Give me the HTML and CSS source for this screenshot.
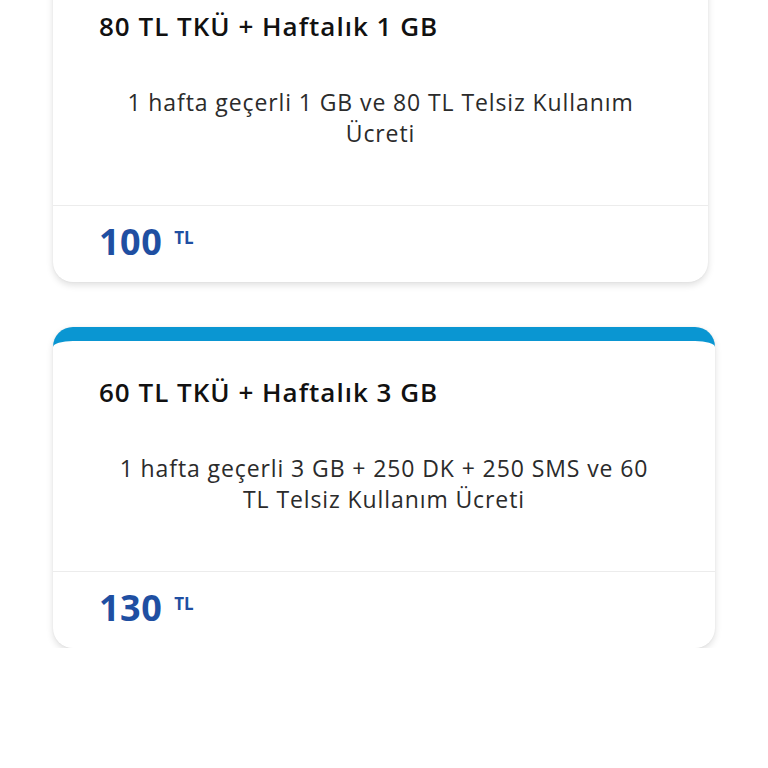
FILE: index.html
```html
<!DOCTYPE html>
<html>
<head>
<meta charset="utf-8">
<link rel="stylesheet" href="styles.css">
</head>
<body>
<div class="packages">
	<div class="package">
		<div class="package-body">
			<div class="package-title">80 TL TKÜ + Haftalık 1 GB</div>
			<div class="package-desc">1 hafta geçerli 1 GB ve 80 TL Telsiz Kullanım Ücreti</div>
		</div>
		<div class="package-price">
			<span class="amount">100</span>
			<span class="currency">TL</span>
		</div>
	</div>
	<div class="package package-wide package-selected">
		<div class="package-body">
			<div class="package-title">60 TL TKÜ + Haftalık 3 GB</div>
			<div class="package-desc">1 hafta geçerli 3 GB + 250 DK + 250 SMS ve 60 TL Telsiz Kullanım Ücreti</div>
		</div>
		<div class="package-price">
			<span class="amount">130</span>
			<span class="currency">TL</span>
		</div>
	</div>
</div>
</body>
</html>
```
FILE: styles.css
```css
body
{
	margin: 0;
	background: #fff;
	font-family: "Open Sans", "Noto Sans", sans-serif;
	color: #1a1a1a;
}

.packages
{
	display: flex;
	flex-direction: column;
	gap: 45px;
	margin-top: -39px;
	padding: 0 53px;
}

.package
{
	background: #fff;
	border-radius: 20px;
	box-shadow: 0 3px 7px rgba(0, 0, 0, 0.13), 0 0 2px rgba(0, 0, 0, 0.06);
	margin-right: 7px;
}

.package-wide
{
	margin-right: 0;
}

.package-selected
{
	border-top: 14px solid #0a96d2;
}

.package-body
{
	padding: 0 46px;
	border-bottom: 1px solid #ececec;
}

.package-title
{
	font-size: 26px;
	font-weight: 600;
	letter-spacing: 1px;
	color: #111;
	padding-top: 49px;
	line-height: 32px;
}

.package-selected .package-title
{
	padding-top: 35px;
}

.package-desc
{
	font-size: 23px;
	line-height: 31px;
	letter-spacing: 0.9px;
	color: #2b2b2b;
	text-align: center;
	padding: 45px 12px 56px;
}

.package-price
{
	height: 76px;
	padding: 0 46px;
	display: flex;
	align-items: center;
	gap: 12px;
	color: #1f4fa2;
	font-weight: 700;
}

.amount
{
	font-size: 36px;
	letter-spacing: 0.5px;
	margin-top: -6px;
}

.currency
{
	font-size: 17px;
	align-self: flex-start;
	margin-top: 20px;
}
```
